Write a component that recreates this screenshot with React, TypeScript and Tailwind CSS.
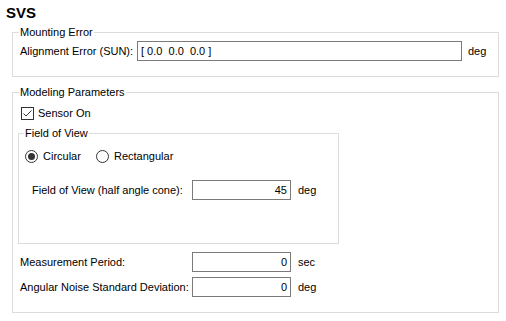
import React from "react";

const font = { fontFamily: '"Liberation Sans", Arial, sans-serif' };

function Checkbox() {
  return (
    <svg width="13" height="13" viewBox="0 0 13 13" className="shrink-0">
      <rect x="0.5" y="0.5" width="12" height="12" fill="#fff" stroke="#333" />
      <path d="M2.5 6.5 L5 9 L10.5 3.5" fill="none" stroke="#333" strokeWidth="1" />
    </svg>
  );
}

function Radio({ on }: { on?: boolean }) {
  return (
    <svg width="13" height="13" viewBox="0 0 13 13" className="shrink-0">
      <circle cx="6.5" cy="6.5" r="6" fill="#fff" stroke="#333" />
      {on && <circle cx="6.5" cy="6.5" r="3.5" fill="#333" />}
    </svg>
  );
}

function Field({ value, className }: { value: string; className: string }) {
  return (
    <div
      className={`h-[20px] border border-[#7a7a7a] bg-white flex items-center text-[11px] leading-[13px] text-black whitespace-pre ${className}`}
    >
      {value}
    </div>
  );
}

export default function App() {
  return (
    <div className="w-[506px] h-[321px] bg-white text-black text-[11px] leading-[13px] pt-[4px]" style={font}>
      <div className="ml-[6px] text-[15px] leading-[18px] font-bold">SVS</div>

      <fieldset className="ml-[12px] mt-[3px] w-[487px] h-[52px] border border-[#dcdcdc] px-0 pb-0">
        <legend className="ml-[6px] px-[1px] leading-[14px]">Mounting Error</legend>
        <div className="flex items-center pl-[7px] pt-[2px]">
          <div className="w-[117px]">Alignment Error (SUN):</div>
          <Field value="[ 0.0  0.0  0.0 ]" className="w-[325px] pl-[3px]" />
          <div className="ml-[6px]">deg</div>
        </div>
      </fieldset>

      <fieldset className="ml-[12px] mt-[8px] w-[487px] h-[228px] border border-[#dcdcdc] px-0 pb-0">
        <legend className="ml-[6px] px-[1px] leading-[14px]">Modeling Parameters</legend>
        <div className="pl-[5px]">
          <div className="ml-[3px] mt-[8px] flex items-center h-[13px]">
            <Checkbox />
            <span className="ml-[4px]">Sensor On</span>
          </div>

          <fieldset className="mt-[6px] w-[321px] h-[118px] border border-[#dcdcdc] px-0 pb-0">
            <legend className="ml-[5px] px-[1px] leading-[14px]">Field of View</legend>
            <div className="pl-[6px] pt-[10px] flex items-center h-[23px]">
              <div className="w-[71px] flex items-center">
                <Radio on />
                <span className="ml-[5px]">Circular</span>
              </div>
              <div className="flex items-center">
                <Radio />
                <span className="ml-[5px]">Rectangular</span>
              </div>
            </div>
            <div className="ml-[13px] mt-[17px] flex items-center">
              <div className="w-[160px]">Field of View (half angle cone):</div>
              <Field value="45" className="w-[99px] justify-end pr-[3px]" />
              <div className="ml-[7px]">deg</div>
            </div>
          </fieldset>

          <div className="ml-[2px] mt-[8px] flex items-center">
            <div className="w-[172px]">Measurement Period:</div>
            <Field value="0" className="w-[99px] justify-end pr-[3px]" />
            <div className="ml-[7px]">sec</div>
          </div>
          <div className="ml-[2px] mt-[5px] flex items-center">
            <div className="w-[172px]">Angular Noise Standard Deviation:</div>
            <Field value="0" className="w-[99px] justify-end pr-[3px]" />
            <div className="ml-[7px]">deg</div>
          </div>
        </div>
      </fieldset>
    </div>
  );
}
